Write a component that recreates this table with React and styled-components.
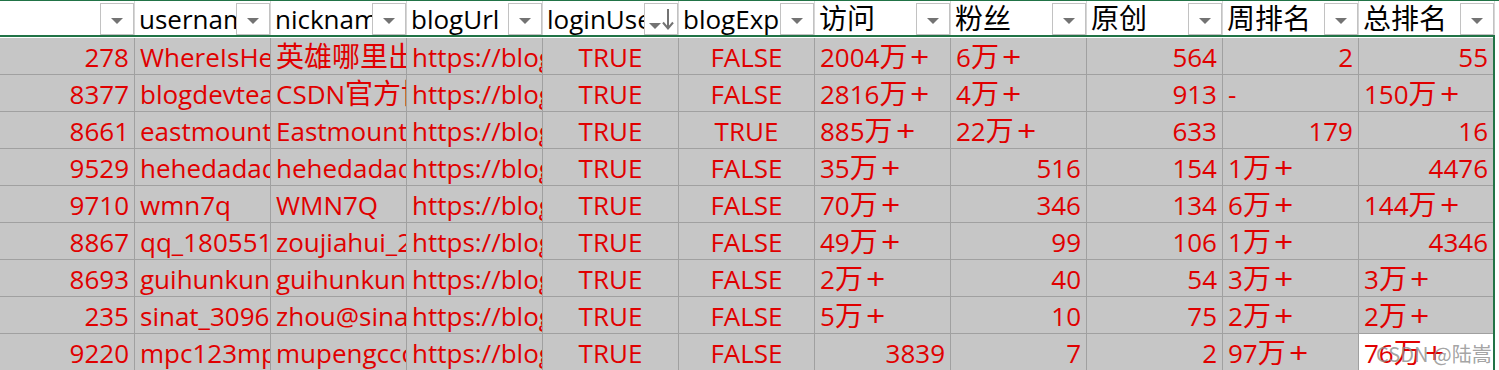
import React from "react";
import styled, { createGlobalStyle } from "styled-components";

const GREEN = "#217346";
const GRAY = "#c6c6c6";
const GRID = "#a0a0a0";
const RED = "#e00000";

const Global = createGlobalStyle`
  html, body { margin: 0; padding: 0; overflow: hidden; background: #ffffff; }
  body { font-family: "Open Sans", "Noto Sans CJK SC", sans-serif; }
`;

const Sheet = styled.div`
  width: 1499px;
  border-top: 1px solid ${GREEN};
  display: flex;
  flex-direction: column;
  font-family: "Open Sans", "Noto Sans CJK SC", sans-serif;
  font-size: 26px;
`;

const HeaderRow = styled.div`
  display: flex;
  height: 34px;
  background: #ffffff;
`;

const HeaderCell = styled.div`
  box-sizing: border-box;
  flex: 0 0 ${(p) => p.$w}px;
  width: ${(p) => p.$w}px;
  min-width: 0;
  overflow: hidden;
  height: 34px;
  display: flex;
  border-right: 1px solid #d6d6d6;
  background: #ffffff;
`;

const HeaderLabel = styled.div`
  flex: 1 1 0;
  min-width: 0;
  overflow: hidden;
  white-space: nowrap;
  padding-left: 4px;
  line-height: 36px;
  height: 34px;
  color: #000000;
`;

const FilterButton = styled.div`
  box-sizing: border-box;
  flex: 0 0 34px;
  height: 32px;
  align-self: flex-end;
  border: 1px solid #c2c2c2;
  background: #ffffff;
  display: flex;
  align-items: center;
  justify-content: center;
`;

const Body = styled.div`
  box-sizing: border-box;
  width: 1495px;
  border-top: 2px solid ${GREEN};
  border-right: 2px solid ${GREEN};
  padding-top: 1px;
  background: #ffffff;
  display: flex;
  flex-direction: column;
`;

const Row = styled.div`
  display: flex;
  height: 36px;
  border-bottom: 1px solid ${GRID};
  background: ${GRAY};
`;

const Cell = styled.div`
  position: relative;
  box-sizing: border-box;
  flex: 0 0 ${(p) => p.$w}px;
  min-width: 0;
  height: 36px;
  padding: 0 5px 0 5px;
  overflow: hidden;
  white-space: nowrap;
  text-align: ${(p) => p.$align};
  line-height: 38px;
  color: ${RED};
  background: ${(p) => (p.$white ? "#ffffff" : GRAY)};
  border-right: ${(p) => (p.$last ? "none" : `1px solid ${GRID}`)};
`;

const Han = styled.span`
  font-family: "Noto Sans CJK SC", sans-serif;
  font-size: 28px;
  line-height: 0;
`;

const Plus = styled.span`
  display: inline-block;
  margin-left: 3px;
  transform: scale(1.3, 1.1);
  transform-origin: left 70%;
`;

const Watermark = styled.div`
  position: absolute;
  z-index: 1;
  left: 17px;
  top: 10px;
  font-family: "Noto Sans CJK SC", sans-serif;
  font-size: 20px;
  line-height: 20px;
  color: rgba(140, 140, 140, 0.8);
  white-space: nowrap;
  pointer-events: none;
`;

const renderText = (str) => {
  const parts = String(str).split(/([\u3400-\u9fff]+|\+)/);
  return parts.map((p, i) => {
    if (p === "+") return <Plus key={i}>+</Plus>;
    if (/[\u3400-\u9fff]/.test(p)) return <Han key={i}>{p}</Han>;
    return p;
  });
};

const FilterIcon = () => (
  <svg width="14" height="8" viewBox="0 0 14 8" style={{ marginTop: 4 }}>
    <polygon points="1,1 13,1 7,7" fill="#737373" />
  </svg>
);

const SortIcon = () => (
  <svg width="32" height="30" viewBox="0 0 32 30">
    <polygon points="4,19 16,19 10,25" fill="#737373" />
    <line x1="23" y1="5" x2="23" y2="24" stroke="#737373" strokeWidth="2" />
    <polyline points="18,18.5 23,24.5 28,18.5" fill="none" stroke="#737373" strokeWidth="2" />
  </svg>
);

const columns = [
  { label: "", w: 135 },
  { label: "username", w: 136 },
  { label: "nickname", w: 136 },
  { label: "blogUrl", w: 136 },
  { label: "loginUser", w: 136, sort: true },
  { label: "blogExpert", w: 136 },
  { label: "访问", w: 136 },
  { label: "粉丝", w: 136 },
  { label: "原创", w: 136 },
  { label: "周排名", w: 136 },
  { label: "总排名", w: 136 },
];

const rows = [
  [278, "WhereIsHeroFrom", "英雄哪里出来", "https://blog.csdn.net/", true, false, "2004万+", "6万+", 564, 2, 55],
  [8377, "blogdevteam", "CSDN官方博客", "https://blog.csdn.net/", true, false, "2816万+", "4万+", 913, "-", "150万+"],
  [8661, "eastmount", "Eastmount", "https://blog.csdn.net/", true, true, "885万+", "22万+", 633, 179, 16],
  [9529, "hehedadaq", "hehedadaq", "https://blog.csdn.net/", true, false, "35万+", 516, 154, "1万+", 4476],
  [9710, "wmn7q", "WMN7Q", "https://blog.csdn.net/", true, false, "70万+", 346, 134, "6万+", "144万+"],
  [8867, "qq_18055167", "zoujiahui_2018", "https://blog.csdn.net/", true, false, "49万+", 99, 106, "1万+", 4346],
  [8693, "guihunkun", "guihunkun", "https://blog.csdn.net/", true, false, "2万+", 40, 54, "3万+", "3万+"],
  [235, "sinat_30962195", "zhou@sina", "https://blog.csdn.net/", true, false, "5万+", 10, 75, "2万+", "2万+"],
  [9220, "mpc123mpc", "mupengccc", "https://blog.csdn.net/", true, false, 3839, 7, 2, "97万+", "76万+"],
];

const alignOf = (v) =>
  typeof v === "number" ? "right" : typeof v === "boolean" ? "center" : "left";

const display = (v) => (typeof v === "boolean" ? (v ? "TRUE" : "FALSE") : v);

export default function App() {
  return (
    <>
      <Global />
      <Sheet>
        <HeaderRow>
          {columns.map((c, i) => (
            <HeaderCell key={i} $w={c.w}>
              <HeaderLabel>{renderText(c.label)}</HeaderLabel>
              <FilterButton>{c.sort ? <SortIcon /> : <FilterIcon />}</FilterButton>
            </HeaderCell>
          ))}
        </HeaderRow>
        <Body>
          {rows.map((r, ri) => (
            <Row key={ri}>
              {r.map((v, ci) => {
                const last = ci === r.length - 1;
                const lastRow = ri === rows.length - 1;
                return (
                  <Cell
                    key={ci}
                    $w={last ? 134 : columns[ci].w}
                    $align={alignOf(v)}
                    $last={last}
                    $white={last && lastRow}
                  >
                    {renderText(display(v))}
                    {last && lastRow && <Watermark>CSDN @陆嵩</Watermark>}
                  </Cell>
                );
              })}
            </Row>
          ))}
        </Body>
      </Sheet>
    </>
  );
}
